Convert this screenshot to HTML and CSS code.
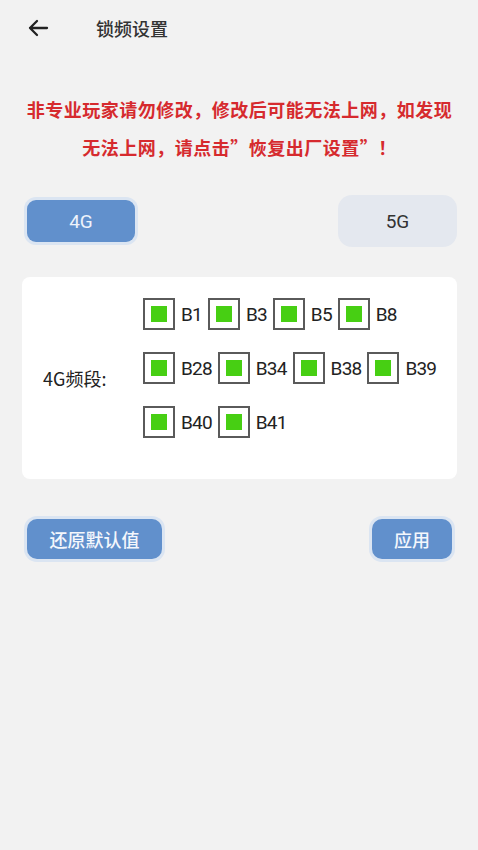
FILE: index.html
```html
<!DOCTYPE html>
<html lang="zh-CN">
<head>
<meta charset="utf-8">
<link rel="stylesheet" href="styles.css">
</head>
<body>
<div class="page">
  <header class="topbar">
    <svg class="back" width="24" height="24" viewBox="0 0 24 24"><path d="M21 12H4M11 5L4 12L11 19" fill="none" stroke="#222" stroke-width="2.3" stroke-linecap="round" stroke-linejoin="round"/></svg>
    <span class="title">锁频设置</span>
  </header>
  <p class="warn">非专业玩家请勿修改，修改后可能无法上网，如发现<br>无法上网，请点击”恢复出厂设置”！</p>
  <div class="tabs">
    <div class="tab tab-on">4G</div>
    <div class="tab tab-off">5G</div>
  </div>
  <section class="card">
    <div class="band-label">4G频段:</div>
    <div class="bands">
      <div class="row">
        <label class="chk"><span class="box"><i></i></span>B1</label>
        <label class="chk"><span class="box"><i></i></span>B3</label>
        <label class="chk"><span class="box"><i></i></span>B5</label>
        <label class="chk"><span class="box"><i></i></span>B8</label>
      </div>
      <div class="row">
        <label class="chk"><span class="box"><i></i></span>B28</label>
        <label class="chk"><span class="box"><i></i></span>B34</label>
        <label class="chk"><span class="box"><i></i></span>B38</label>
        <label class="chk"><span class="box"><i></i></span>B39</label>
      </div>
      <div class="row">
        <label class="chk"><span class="box"><i></i></span>B40</label>
        <label class="chk"><span class="box"><i></i></span>B41</label>
      </div>
    </div>
  </section>
  <div class="actions">
    <div class="btn btn-reset">还原默认值</div>
    <div class="btn btn-apply">应用</div>
  </div>
</div>
</body>
</html>
```
FILE: styles.css
```css
* { box-sizing: border-box; }
html, body { margin: 0; padding: 0; }
body {
  background: #f2f2f2;
  font-family: "Noto Sans CJK SC", "Noto Sans", sans-serif;
  color: #222;
  width: 478px;
  height: 850px;
  overflow: hidden;
}
.page { padding: 0 21px 0 22px; }
.topbar {
  height: 56px;
  display: flex;
  align-items: center;
  padding-left: 4px;
}
.back { display: block; }
.title {
  margin-left: 46px;
  font-size: 18px;
  font-weight: 500;
  color: #333;
  margin-top: -1px;
}
.warn {
  margin: 34px 0 0 0;
  text-align: center;
  color: #d62a2e;
  font-size: 18px;
  line-height: 38px;
  font-weight: 700;
  letter-spacing: 0.5px;
}
.tabs {
  margin-top: 29px;
  display: flex;
  justify-content: space-between;
  align-items: center;
}
.tab {
  display: flex;
  align-items: center;
  justify-content: center;
  font-family: Roboto, "Noto Sans", sans-serif;
  font-size: 19px;
}
.tab-on {
  margin-left: 5px;
  width: 108px;
  height: 42px;
  border-radius: 9px;
  background: #6190cc;
  color: #eef3fb;
  box-shadow: 0 0 0 3px #dbe5f2;
}
.tab-off {
  width: 119px;
  height: 52px;
  border-radius: 14px;
  background: #e4e8ef;
  color: #333;
}
.card {
  margin-top: 30px;
  background: #fff;
  border-radius: 8px;
  height: 202px;
  display: flex;
  align-items: center;
}
.band-label {
  width: 121px;
  padding-left: 21px;
  font-size: 18px;
  color: #222;
  align-self: center;
}
.bands {
  align-self: flex-start;
  padding-top: 21px;
  display: flex;
  flex-direction: column;
  gap: 22px;
}
.row { display: flex; gap: 6px; height: 32px; }
.chk {
  display: flex;
  align-items: center;
  gap: 6px;
  font-family: Roboto, "Noto Sans", sans-serif;
  font-size: 19px;
  letter-spacing: -0.8px;
  color: #222;
}
.box {
  width: 32px;
  height: 32px;
  border: 2px solid #5a5a5a;
  display: flex;
  align-items: center;
  justify-content: center;
}
.box i {
  display: block;
  width: 16px;
  height: 16px;
  background: #47cf13;
}
.actions {
  margin-top: 40px;
  display: flex;
  justify-content: space-between;
  padding: 0 5px;
}
.btn {
  height: 40px;
  border-radius: 10px;
  background: #6190cc;
  color: #f4f7fc;
  font-size: 18px;
  font-weight: 500;
  display: flex;
  align-items: center;
  justify-content: center;
  box-shadow: 0 0 0 3px #dbe5f2;
}
.btn-reset { width: 135px; }
.btn-apply { width: 80px; }
```
